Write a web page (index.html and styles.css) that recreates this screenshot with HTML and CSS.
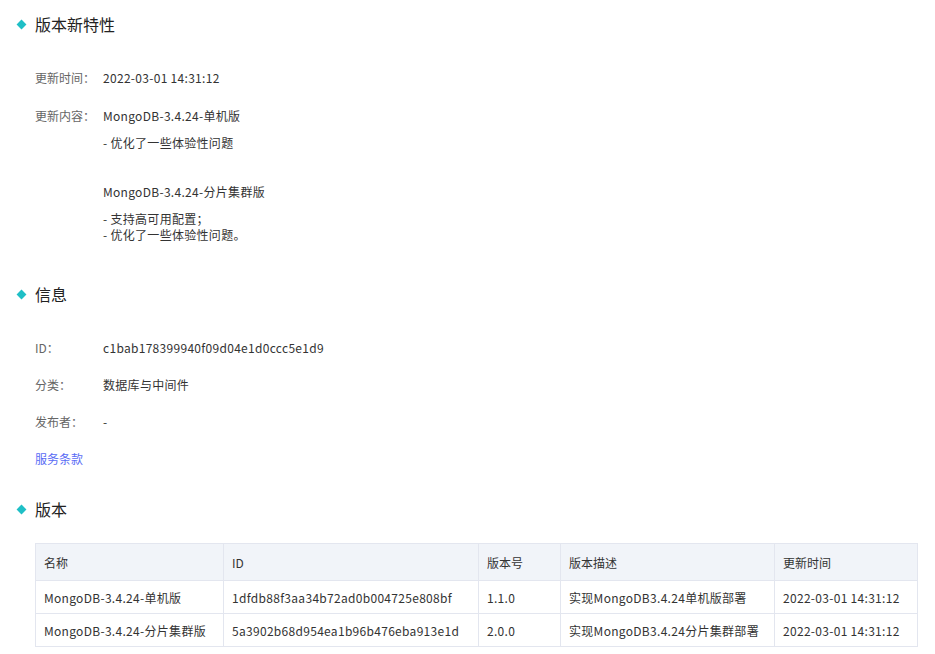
FILE: index.html
```html
<!DOCTYPE html>
<html lang="zh-CN">
<head>
    <meta charset="UTF-8">
    <meta name="viewport" content="width=device-width, initial-scale=1.0">
    <title>MongoDB 详情</title>
    <link rel="stylesheet" href="styles.css">
</head>
<body>
    <div class="page">
        <div class="section-title"><span class="dot"></span>版本新特性</div>
        <div class="fields fields-feature">
            <div class="label">更新时间：</div>
            <div class="value">2022-03-01 14:31:12</div>

            <div class="label">更新内容：</div>
            <div class="value">
                <div class="release">
                    <p class="release-name">MongoDB-3.4.24-单机版</p>
                    <p class="release-note">- 优化了一些体验性问题</p>
                </div>
                <div class="release">
                    <p class="release-name">MongoDB-3.4.24-分片集群版</p>
                    <p class="release-note">- 支持高可用配置；<br>- 优化了一些体验性问题。</p>
                </div>
            </div>
        </div>

        <div class="section-title"><span class="dot"></span>信息</div>
        <div class="fields fields-info">
            <div class="label">ID：</div>
            <div class="value">c1bab178399940f09d04e1d0ccc5e1d9</div>

            <div class="label">分类：</div>
            <div class="value">数据库与中间件</div>

            <div class="label">发布者：</div>
            <div class="value">-</div>
        </div>
        <a class="terms" href="#">服务条款</a>

        <div class="section-title"><span class="dot"></span>版本</div>
        <table class="versions">
            <thead>
                <tr>
                    <th class="col-name">名称</th>
                    <th class="col-id">ID</th>
                    <th class="col-ver">版本号</th>
                    <th class="col-desc">版本描述</th>
                    <th class="col-time">更新时间</th>
                </tr>
            </thead>
            <tbody>
                <tr>
                    <td>MongoDB-3.4.24-单机版</td>
                    <td>1dfdb88f3aa34b72ad0b004725e808bf</td>
                    <td>1.1.0</td>
                    <td>实现MongoDB3.4.24单机版部署</td>
                    <td>2022-03-01 14:31:12</td>
                </tr>
                <tr>
                    <td>MongoDB-3.4.24-分片集群版</td>
                    <td>5a3902b68d954ea1b96b476eba913e1d</td>
                    <td>2.0.0</td>
                    <td>实现MongoDB3.4.24分片集群部署</td>
                    <td>2022-03-01 14:31:12</td>
                </tr>
            </tbody>
        </table>
    </div>
</body>
</html>
```

FILE: styles.css
```css
body {
    margin: 0;
    background: #fff;
    font-family: "Noto Sans CJK SC", "Noto Sans", sans-serif;
    font-size: 12px;
    letter-spacing: 0.3px;
    color: #333;
}
.page {
    padding: 12px 18px 0 35px;
}
.section-title {
    position: relative;
    font-size: 16px;
    line-height: 24px;
    height: 24px;
    letter-spacing: 0;
    color: #222;
}
.section-title .dot {
    position: absolute;
    left: -17px;
    top: 9px;
    width: 7px;
    height: 7px;
    background: #1fbfc6;
    transform: rotate(45deg);
}
.fields {
    display: grid;
    grid-template-columns: 68px 1fr;
    line-height: 16px;
}
.fields-feature {
    margin-top: 34px;
    row-gap: 22px;
    margin-bottom: 39px;
}
.fields-info {
    margin-top: 34px;
    row-gap: 21px;
}
.label {
    color: #666;
    letter-spacing: 0;
}
.value p {
    margin: 0;
}
.release + .release {
    margin-top: 33px;
}
.release-note {
    margin-top: 11px !important;
}
.terms {
    display: block;
    margin-top: 21px;
    margin-bottom: 30px;
    line-height: 16px;
    letter-spacing: 0;
    color: #5a6cf5;
    text-decoration: none;
}
.versions {
    margin-top: 22px;
    width: 882px;
    border-collapse: collapse;
    table-layout: fixed;
}
.versions th,
.versions td {
    box-sizing: border-box;
    border: 1px solid #e3e6ef;
    padding: 0 8px;
    text-align: left;
    font-weight: normal;
    white-space: nowrap;
}
.versions th {
    height: 37px;
    background: #f1f4f9;
    letter-spacing: 0;
}
.versions td {
    height: 33px;
}
.col-name { width: 188px; }
.col-id { width: 255px; }
.col-ver { width: 82px; }
.col-desc { width: 214px; }
.col-time { width: 143px; }
```
